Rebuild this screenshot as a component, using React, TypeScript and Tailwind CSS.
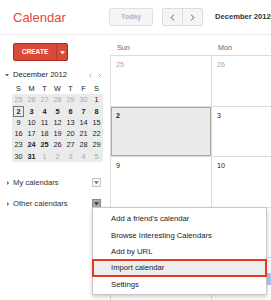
import React from "react";

const miniWeeks = [
  [25, 26, 27, 28, 29, 30, 1],
  [2, 3, 4, 5, 6, 7, 8],
  [9, 10, 11, 12, 13, 14, 15],
  [16, 17, 18, 19, 20, 21, 22],
  [23, 24, 25, 26, 27, 28, 29],
  [30, 31, 1, 2, 3, 4, 5],
];

const boldDays = new Set([2, 3, 4, 5, 6, 7, 8, 24, 25, 31]);
const dayNames = ["Sun", "Mon", "Tue", "Wed", "Thu", "Fri", "Sat"];
const rowHeights = ["h-[51px]", "h-[50px]", "h-[51px]", "h-[50px]", "h-[51px]"];

const menuItems = [
  "Add a friend's calendar",
  "Browse Interesting Calendars",
  "Add by URL",
  "Import calendar",
  "Settings",
];

function isOther(r: number, c: number) {
  return (r === 0 && c < 6) || (r === 5 && c > 1);
}

function Chevron({ dir, className }: { dir: "left" | "right"; className?: string }) {
  return (
    <svg viewBox="0 0 6 10" className={className} fill="none" stroke="currentColor" strokeWidth="1.4">
      {dir === "left" ? <polyline points="5,1 1,5 5,9" /> : <polyline points="1,1 5,5 1,9" />}
    </svg>
  );
}

function Caret({ down, className }: { down?: boolean; className?: string }) {
  return (
    <svg viewBox="0 0 6 6" className={className} fill="currentColor">
      {down ? <polygon points="0,1.5 6,1.5 3,5" /> : <polygon points="1.5,0 5,3 1.5,6" />}
    </svg>
  );
}

function DropBox({ pressed }: { pressed?: boolean }) {
  return (
    <div
      className={
        pressed
          ? "flex h-[9px] w-[9px] items-center justify-center border border-[#888] bg-[#aaa] text-[#333]"
          : "flex h-[9px] w-[9px] items-center justify-center border border-[#c6c6c6] bg-[#f8f8f8] text-[#777]"
      }
    >
      <Caret down className="h-[5px] w-[5px]" />
    </div>
  );
}

export default function App() {
  return (
    <div className="relative h-[300px] w-[271px] overflow-hidden bg-white font-['Liberation_Sans',Arial,sans-serif] text-[#222]">
      {/* Top bar */}
      <header className="flex h-[35px] items-center border-b border-[#ebebeb]">
        <div className="w-[109px] pl-[13px] text-[13px] leading-none text-[#dd4b39]">Calendar</div>
        <div className="flex h-[18px] w-[44px] items-center justify-center rounded-[2px] border border-[#e0e0e0] bg-[#f5f5f5] text-[7px] font-bold text-[#b5b5b5]">
          Today
        </div>
        <div className="ml-[9px] flex h-[18px] w-[41px] rounded-[2px] border border-[#dcdcdc] bg-[#f5f5f5] text-[#555]">
          <div className="flex flex-1 items-center justify-center border-r border-[#dcdcdc]">
            <Chevron dir="left" className="h-[7px] w-[5px]" />
          </div>
          <div className="flex flex-1 items-center justify-center">
            <Chevron dir="right" className="h-[7px] w-[5px]" />
          </div>
        </div>
        <div className="ml-[12px] whitespace-nowrap text-[7.6px] font-bold text-[#333]">December 2012</div>
      </header>

      <div className="flex">
        {/* Sidebar */}
        <aside className="w-[110px] shrink-0">
          <div className="ml-[13px] mt-[8px] flex h-[18px] w-[55px] rounded-[2px] border border-[#b0281a] bg-[#d94a38]">
            <div className="flex flex-1 items-center justify-center text-[6.6px] font-bold text-white">CREATE</div>
            <div className="flex w-[11px] items-center justify-center border-l border-[#b8402f] text-white">
              <Caret down className="h-[5px] w-[5px]" />
            </div>
          </div>

          <div className="mt-[8px] flex h-[12px] items-center">
            <Caret down className="ml-[5px] h-[4px] w-[4px] text-[#555]" />
            <span className="ml-[4px] whitespace-nowrap text-[7.6px]">December 2012</span>
            <div className="ml-auto mr-[9px] flex gap-[6px] text-[#999]">
              <Chevron dir="left" className="h-[5px] w-[3px]" />
              <Chevron dir="right" className="h-[5px] w-[3px]" />
            </div>
          </div>

          <div className="ml-[12px] mt-[2px] w-[91px]">
            <div className="grid h-[11.3px] grid-cols-7 text-center text-[7.3px] leading-[11.3px]">
              {["S", "M", "T", "W", "T", "F", "S"].map((d, i) => (
                <div key={i}>{d}</div>
              ))}
            </div>
            <div className="bg-[#ebebeb]">
              {miniWeeks.map((week, r) => (
                <div key={r} className="grid h-[11.3px] grid-cols-7 text-center text-[7.3px] leading-[11.3px]">
                  {week.map((d, c) => {
                    const other = isOther(r, c);
                    const today = r === 1 && c === 0;
                    return (
                      <div key={c} className="flex items-center justify-center">
                        <span
                          className={
                            (other ? "text-[#aaa] " : "text-[#222] ") +
                            (!other && boldDays.has(d) ? "font-bold " : "") +
                            (today ? "box-border h-[11px] w-[11px] border border-[#777] leading-[9px]" : "")
                          }
                        >
                          {d}
                        </span>
                      </div>
                    );
                  })}
                </div>
              ))}
            </div>
          </div>

          <div className="mt-[10px]">
            {["My calendars", "Other calendars"].map((label, i) => (
              <div key={label} className="flex h-[21px] items-center pr-[9px]">
                <Caret className="ml-[6px] h-[4px] w-[4px] text-[#777]" />
                <span className="ml-[3px] text-[7.7px] text-[#333]">{label}</span>
                <div className="ml-auto">
                  <DropBox pressed={i === 1} />
                </div>
              </div>
            ))}
          </div>
        </aside>

        {/* Month grid */}
        <main className="min-w-0 flex-1 overflow-hidden">
          <div className="w-[708px]">
            <div className="grid h-[20px] grid-cols-[repeat(7,101px)] pl-[1px]">
              {dayNames.map((d) => (
                <div key={d} className="pl-[6px] pt-[8px] text-[7.2px] text-[#666]">
                  {d}
                </div>
              ))}
            </div>
            <div className="border-l border-t border-[#dcdcdc]">
              {rowHeights.map((h, r) => (
                <div key={r} className={"grid grid-cols-[repeat(7,101px)] " + h}>
                  {miniWeeks[r].map((d, c) => {
                    const other = r === 0 && c < 6;
                    const selected = r === 1 && c === 0;
                    return (
                      <div
                        key={c}
                        className={
                          "border-b border-r border-[#dcdcdc] pl-[5px] pt-[4px] text-[7.2px] leading-[9px] " +
                          (selected ? "bg-[#ebebeb] font-bold shadow-[inset_0_0_0_1px_#a8a8a8] " : "") +
                          (other ? "text-[#aaa]" : "text-[#222]")
                        }
                      >
                        {d}
                        {r === 4 && c === 1 && <div className="-ml-[5px] mt-[2px] h-[12px] w-[95px] bg-[#a9c7ef]" />}
                      </div>
                    );
                  })}
                </div>
              ))}
            </div>
          </div>
        </main>
      </div>

      {/* Other calendars menu */}
      <div className="absolute left-[92px] top-[207px] w-[175px] border border-[#c8c8c8] bg-white pb-[2px] pt-[3px] shadow-[0_2px_4px_rgba(0,0,0,0.2)]">
        {menuItems.map((item) => {
          const hot = item === "Import calendar";
          return (
            <div
              key={item}
              className={
                "relative flex h-[16.3px] items-center pl-[18px] text-[7.7px] text-[#222] " + (hot ? "bg-[#eeeeee]" : "")
              }
            >
              {item}
              {hot && <div className="absolute -left-[1px] -right-[1px] -top-[1px] -bottom-[1px] border-2 border-[#e8391d]" />}
            </div>
          );
        })}
      </div>
    </div>
  );
}
